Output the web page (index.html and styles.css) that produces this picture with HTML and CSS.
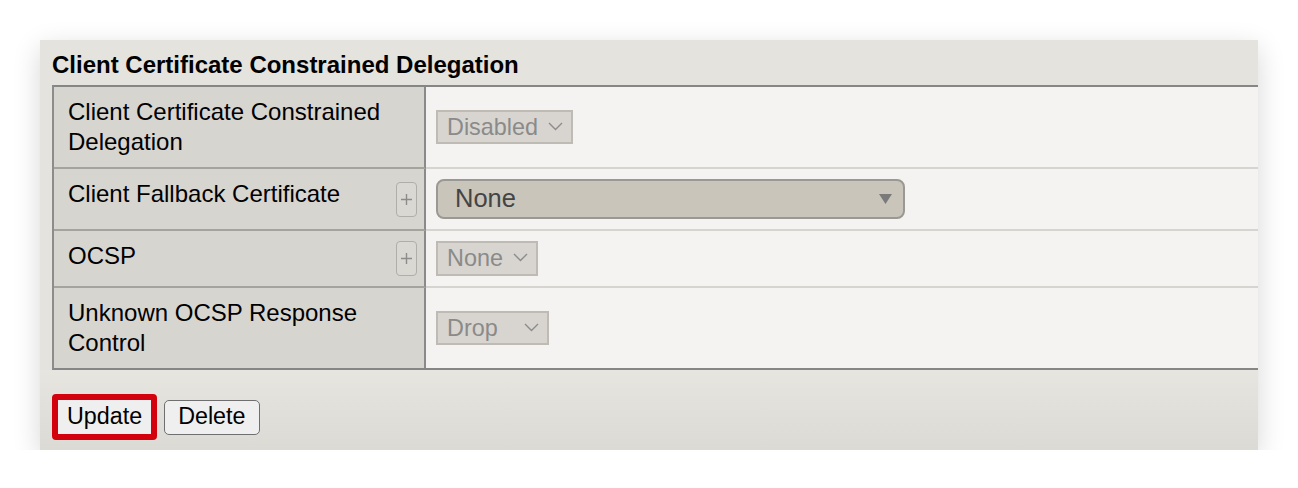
FILE: index.html
```html
<!DOCTYPE html>
<html lang="en">
<head>
<meta charset="utf-8">
<title>Client Certificate Constrained Delegation</title>
<link rel="stylesheet" href="styles.css">
</head>
<body>
<div class="panel">
  <div class="panel-title">Client Certificate Constrained Delegation</div>
  <div class="grid">
    <div class="label"><span class="label-text">Client Certificate Constrained Delegation</span></div>
    <div class="value">
      <div class="dis-select w-disabled"><span>Disabled</span>
        <svg class="chev" width="15" height="9" viewBox="0 0 15 9"><polyline points="1,1 7.5,7.5 14,1" fill="none" stroke="#8c8c8c" stroke-width="1.4"/></svg>
      </div>
    </div>

    <div class="label"><span class="label-text">Client Fallback Certificate</span>
      <span class="plus"><svg width="11" height="11" viewBox="0 0 11 11"><path d="M0 5.5H11M5.5 0V11" stroke="#8c8c8c" stroke-width="1.4"/></svg></span>
    </div>
    <div class="value">
      <div class="big-select"><span>None</span>
        <svg width="13" height="10" viewBox="0 0 13 10"><polygon points="0,0 13,0 6.5,10" fill="#7a7a7a"/></svg>
      </div>
    </div>

    <div class="label"><span class="label-text">OCSP</span>
      <span class="plus"><svg width="11" height="11" viewBox="0 0 11 11"><path d="M0 5.5H11M5.5 0V11" stroke="#8c8c8c" stroke-width="1.4"/></svg></span>
    </div>
    <div class="value">
      <div class="dis-select w-none"><span>None</span>
        <svg class="chev" width="15" height="9" viewBox="0 0 15 9"><polyline points="1,1 7.5,7.5 14,1" fill="none" stroke="#8c8c8c" stroke-width="1.4"/></svg>
      </div>
    </div>

    <div class="label"><span class="label-text">Unknown OCSP Response Control</span></div>
    <div class="value">
      <div class="dis-select w-drop"><span>Drop</span>
        <svg class="chev" width="15" height="9" viewBox="0 0 15 9"><polyline points="1,1 7.5,7.5 14,1" fill="none" stroke="#8c8c8c" stroke-width="1.4"/></svg>
      </div>
    </div>
  </div>
  <div class="footer">
    <button class="btn btn-update" type="button">Update</button>
    <button class="btn btn-delete" type="button">Delete</button>
  </div>
</div>
</body>
</html>
```

FILE: styles.css
```css
html, body {
  margin: 0;
  padding: 0;
  background: #ffffff;
}

body {
  padding: 40px 40px 0 40px;
  font-family: "Liberation Sans", Arial, Helvetica, sans-serif;
  color: #000;
}

.panel {
  width: 1218px;
  background: #e4e3de;
  box-shadow: 0 8px 26px rgba(0, 0, 0, 0.16);
}

.panel-title {
  font-weight: bold;
  font-size: 24px;
  line-height: 30px;
  padding: 10px 12px 5px 12px;
}

.grid {
  margin-left: 12px;
  display: grid;
  grid-template-columns: 372px 1fr;
  border-top: 2px solid #868686;
  border-bottom: 2px solid #868686;
  border-left: 2px solid #8c8c8c;
}

.label {
  background: #d7d5d0;
  border-right: 2px solid #8a8a8a;
  border-bottom: 2px solid #a5a39e;
  padding: 10px 7px 10px 14px;
  display: flex;
  align-items: flex-start;
  justify-content: space-between;
  font-size: 24px;
  line-height: 30px;
}

.label-text {
  flex: 1;
  padding-right: 9px;
}

.value {
  background: #f4f3f1;
  border-bottom: 2px solid #d6d4d1;
  padding: 10px 10px;
  display: flex;
  align-items: center;
}

.grid > :nth-last-child(-n+2) {
  border-bottom: 0;
}

.plus {
  align-self: center;
  width: 19px;
  height: 33px;
  border: 1px solid #b0aea9;
  border-radius: 4px;
  background: #dad8d3;
  display: flex;
  align-items: center;
  justify-content: center;
  flex: none;
}

.plus svg {
  display: block;
}

.dis-select {
  box-sizing: border-box;
  height: 34px;
  border: 2px solid #bebbb5;
  background: #d8d5d0;
  color: #8a8a8a;
  font-size: 23.4px;
  display: flex;
  align-items: center;
  justify-content: space-between;
  padding: 0 8px 0 9px;
}

.w-disabled { width: 137px; }
.w-none { width: 102px; height: 35px; }
.w-drop { width: 113px; }

.chev {
  display: block;
  margin-top: -2px;
}

.big-select {
  box-sizing: border-box;
  width: 469px;
  height: 40px;
  border: 2px solid #9a9893;
  border-radius: 8px;
  background: #c9c5bb;
  color: #444;
  font-size: 25.5px;
  display: flex;
  align-items: center;
  justify-content: space-between;
  padding: 0 11px 2px 17px;
}

.big-select svg {
  display: block;
  margin-top: 2px;
}

.footer {
  display: flex;
  align-items: center;
  gap: 7px;
  padding: 24px 0 10px 12px;
  background: linear-gradient(#e6e5e0, #dbdad4);
}

.btn {
  font-family: "Liberation Sans", Arial, Helvetica, sans-serif;
  font-size: 23.3px;
  color: #000;
  background: #efefef;
  margin: 0;
  line-height: 1;
  box-sizing: border-box;
}

.btn-update {
  height: 46px;
  border: 6px solid #d3000d;
  border-radius: 4px;
  padding: 0 9px;
}

.btn-delete {
  height: 35px;
  border: 1.5px solid #6f6f6f;
  border-radius: 5px;
  padding: 0 14px 0 13px;
}
```
